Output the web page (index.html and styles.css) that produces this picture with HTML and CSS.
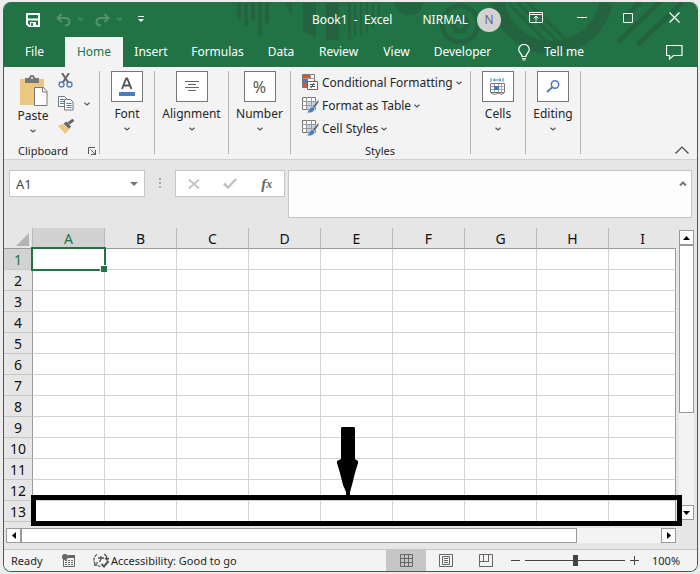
FILE: index.html
```html
<!DOCTYPE html>
<html lang="en">
<head>
<meta charset="utf-8">
<title>Book1 - Excel</title>
<link rel="stylesheet" href="styles.css">
</head>
<body>
<svg width="0" height="0" class="defs" aria-hidden="true">
  <symbol id="chev" viewBox="0 0 6 4"><path d="M.5.8L3 3 5.500.8" fill="none" stroke="currentColor" stroke-width="1.200"/></symbol>
  <symbol id="brush" viewBox="0 0 17 17">
    <path d="M.5.500h13v12H.5z" fill="#fff" stroke="#777"/>
    <path d="M4 4h9v8H4z" fill="#c3d3e8"/>
    <path d="M0 4.500h14M4.500 0v13M9.500 0v13M0 8.500h14" stroke="#999" fill="none"/>
    <path d="M16.500 2.500L10 10l2 2 5-7z" fill="#666" stroke="#f3f3f3" stroke-width=".6"/>
    <path d="M10 9.500c2 .5 3 1.500 2.500 3.500-1 2.500-5 3.500-8 2.500 2-.5 2-4 5.500-6z" fill="#4a7ebb" stroke="#f3f3f3" stroke-width=".6"/>
  </symbol>
</svg>
<div class="window">
  <header class="top">
    <svg class="pattern" width="695" height="65" viewBox="0 0 695 65" aria-hidden="true">
      <g fill="#246340">
        <path d="M235 1h4v16h-4zM242 1h4v23h-4zM249 1h4v17h-4zM256 1h4v32h-4zM263 1h4v20h-4zM283 1h7v14z"/>
        <path d="M301 1h13v34q-7-2-13-7zM324 1h13v37h-13zM346 1h3v36h-3zM352 1h2v34h-2zM358 1h2v32h-2zM364 1h2v29h-2zM370 1h2v25h-2zM376 1h2v18h-2z"/>
        <path d="M393 1h28a14 12 0 0 1-28 0z"/>
      </g>
      <g fill="none" stroke="#246340">
        <circle cx="458" cy="22" r="18" stroke-width="5"/>
        <circle cx="458" cy="22" r="7" stroke-width="5"/>
        <path d="M496 1a55 55 0 0 0 108 0" stroke-width="13"/>
        <path d="M507 2l44 44M516 1l42 41M525 0l40 39M491 2l48 48" stroke-width="3"/>
        <path d="M638 0l-18 17M658 0l-42 40M681 0l-46 43" stroke-width="5"/>
      </g>
    </svg>
    <div class="titlebar">
      <div class="quick">
        <button aria-label="Save"><svg width="14" height="14" viewBox="0 0 14 14"><path d="M1 1h12v12H3L1 11z" fill="none" stroke="#fff" stroke-width="2"/><path d="M1 6.500h12" stroke="#fff" stroke-width="2"/><path d="M4 9h6v4H4z" fill="#fff"/><path d="M5 10h2v3H5z" fill="#217346"/></svg></button>
        <button class="dim" aria-label="Undo"><svg width="27" height="14" viewBox="0 0 27 14" fill="none" stroke="currentColor"><path d="M5.500 1L1.500 5l4 4M2 5h7c6 0 6 7.500 0 7.500" stroke-width="2"/><path d="M22 5l2.500 2L27 5" stroke-width="1.300"/></svg></button>
        <button class="dim" aria-label="Redo"><svg width="27" height="14" viewBox="0 0 27 14" fill="none" stroke="currentColor"><path d="M9.500 1l4 4-4 4M13 5H6C0 5 0 12.500 6 12.500" stroke-width="2"/><path d="M22 5l2.500 2L27 5" stroke-width="1.300"/></svg></button>
        <button aria-label="Customize toolbar"><svg width="6" height="7" viewBox="0 0 6 7"><path d="M0 .5h6" stroke="#fff"/><path d="M0 3h6L3 6z" fill="#fff"/></svg></button>
      </div>
      <div class="doc">Book1&nbsp; -&nbsp; Excel</div>
      <div class="user">NIRMAL</div>
      <div class="avatar">N</div>
      <div class="winbtns">
        <button aria-label="Ribbon display options"><svg width="14" height="11" viewBox="0 0 14 11" fill="none" stroke="#fff"><path d="M.5.500h13v10H.5zM.5 2.500h13M7 9.500V4M4.500 6.500L7 4l2.500 2.500"/></svg></button>
        <button aria-label="Minimize"><svg width="10" height="11" viewBox="0 0 10 11"><path d="M0 5.500h10" stroke="#fff"/></svg></button>
        <button aria-label="Maximize"><svg width="10" height="11" viewBox="0 0 10 11"><path d="M.5 1.500h9v9h-9z" fill="none" stroke="#fff"/></svg></button>
        <button aria-label="Close"><svg width="11" height="11" viewBox="0 0 11 11"><path d="M.5.500l10 10M10.500.5l-10 10" stroke="#fff" stroke-width="1.200"/></svg></button>
      </div>
    </div>
    <nav class="tabs">
      <button>File</button><button class="on">Home</button><button>Insert</button><button>Formulas</button><button>Data</button><button>Review</button><button>View</button><button>Developer</button>
      <button class="tell"><svg width="12" height="17" viewBox="0 0 12 17" fill="none" stroke="#fff"><path d="M4 12.500c0-3-3.300-4-3.300-7a5.300 5 0 0 1 10.600 0c0 3-3.300 4-3.300 7zM4 14.500h4M4.500 16h3" stroke-width="1.200"/></svg>Tell me</button>
      <button class="comment" aria-label="Comments"><svg width="17" height="15" viewBox="0 0 17 15"><path d="M.5.500h15.500v10H7.500L3.500 14v-3.500H.5z" fill="none" stroke="#fff" stroke-width="1.200"/></svg></button>
    </nav>
  </header>

  <section class="ribbon" aria-label="Ribbon">
    <div class="group clip">
      <div class="cliprow">
        <button class="paste"><svg width="29" height="31" viewBox="0 0 29 31"><path d="M1 4h24v26H1z" fill="#ecc77f"/><path d="M6 3h4c0-4 6-4 6 0h4v5H6z" fill="#777"/><circle cx="13" cy="3" r="1" fill="#f3f3f3"/><path d="M15.500 12.500h9l3.500 4v14H15.500z" fill="#fff" stroke="#777"/><path d="M23.500 12.500v4.500H28" fill="none" stroke="#777"/></svg><span>Paste</span><svg class="chev"><use href="#chev"/></svg></button>
        <div class="mini">
          <button aria-label="Cut"><svg width="15" height="15" viewBox="0 0 15 15" fill="none"><path d="M4 0l6.500 10M11 0L4.500 10" stroke="#666" stroke-width="2"/><circle cx="3.500" cy="11.500" r="2.500" stroke="#4a7ebb" stroke-width="1.300"/><circle cx="11.500" cy="11.500" r="2.500" stroke="#4a7ebb" stroke-width="1.300"/></svg></button>
          <button class="copy" aria-label="Copy"><svg width="16" height="15" viewBox="0 0 16 15"><path d="M.5.500h6l2.500 2.500v7.500H.5z" fill="#fff" stroke="#777"/><path d="M2 3.500h4M2 5.500h4M2 7.500h4" stroke="#4a7ebb"/><path d="M6.500 3.500h6l2.500 2.500v8H6.500z" fill="#fff" stroke="#777"/><path d="M8.500 7.500h5M8.500 9.500h5M8.500 11.500h5" stroke="#4a7ebb"/></svg><svg class="chev"><use href="#chev"/></svg></button>
          <button aria-label="Format painter"><svg width="16" height="15" viewBox="0 0 16 15"><path d="M0 7l5-2 6 5.500-3.500 4.500z" fill="#ecc77f"/><path d="M5.500 4.500l3-2L13 7.500 11 10z" fill="#666"/><path d="M10.500 4.500L15.500.8" stroke="#666" stroke-width="3"/></svg></button>
        </div>
      </div>
      <div class="label"><span>Clipboard</span><button aria-label="Clipboard options"><svg width="8" height="8" viewBox="0 0 8 8" fill="none" stroke="#555"><path d="M.5 7V.5H7M2.500 2.500l5 5M7.500 3v4.500H3"/></svg></button></div>
    </div>
    <div class="group g-font"><button class="big"><span class="tile"><svg width="18" height="22" viewBox="0 0 18 22"><path d="M4 13L8.200 2.500h1L13.500 13M5.500 9.500h6.500" fill="none" stroke="#555" stroke-width="1.900"/><path d="M1 16h16v4H1z" fill="#4a7ebb"/></svg></span><span>Font</span><svg class="chev"><use href="#chev"/></svg></button></div>
    <div class="group g-align"><button class="big"><span class="tile"><svg width="14" height="11" viewBox="0 0 14 11"><path d="M0 .5h14M3 3.500h8M0 6.500h14M3 9.500h8" stroke="#666"/></svg></span><span>Alignment</span><svg class="chev"><use href="#chev"/></svg></button></div>
    <div class="group g-num"><button class="big"><span class="tile pct">%</span><span>Number</span><svg class="chev"><use href="#chev"/></svg></button></div>
    <div class="group g-styles">
      <button class="row"><svg width="17" height="17" viewBox="0 0 17 17"><path d="M.5.500h12v13H.5z" fill="#fff" stroke="#777"/><path d="M1 1h7v4H1zM1 9h4v4H1z" fill="#dc5532"/><path d="M1 5h5v4H1z" fill="#4a7ebb"/><path d="M8.500 0v5M1 4.500h12" stroke="#999"/><path d="M5.500 7.500h10v8h-10z" fill="#fff" stroke="#666"/><path d="M8 10.500h5M8 12.500h5M12 9l-3 5" stroke="#555"/></svg>Conditional Formatting<svg class="chev"><use href="#chev"/></svg></button>
      <button class="row"><svg width="17" height="17"><use href="#brush"/></svg>Format as Table<svg class="chev"><use href="#chev"/></svg></button>
      <button class="row"><svg width="17" height="17"><use href="#brush"/></svg>Cell Styles<svg class="chev"><use href="#chev"/></svg></button>
      <div class="label">Styles</div>
    </div>
    <div class="group g-cells"><button class="big"><span class="tile"><svg width="16" height="18" viewBox="0 0 16 18"><path d="M1 0v4M13 0v4M3 2h8M5 .5L3.500 2 5 3.500M9.500.5L11 2 9.500 3.500" fill="none" stroke="#4a7ebb"/><path d="M.5 5.500h14v9H.5z" fill="#fff" stroke="#777"/><path d="M1 8.500h13M1 11.500h13M4.500 6v8M8.500 6v8M11.500 6v8" stroke="#aaa"/><path d="M1 15q2 2 5 1l2-1 2 1q2 1 4-1" fill="none" stroke="#777"/><path d="M4 8h5v4H4z" fill="#3f78c0"/></svg></span><span>Cells</span><svg class="chev"><use href="#chev"/></svg></button></div>
    <div class="group g-edit"><button class="big"><span class="tile"><svg width="14" height="13" viewBox="0 0 14 13"><circle cx="9" cy="4.500" r="3.700" fill="none" stroke="#4a7ebb" stroke-width="1.500"/><path d="M6 7.500L1 12" stroke="#4a7ebb" stroke-width="2"/></svg></span><span>Editing</span><svg class="chev"><use href="#chev"/></svg></button></div>
    <button class="collapse" aria-label="Collapse ribbon"><svg width="14" height="8" viewBox="0 0 14 8"><path d="M.5 7.500L7 1l6.500 6.500" fill="none" stroke="#444" stroke-width="1.200"/></svg></button>
  </section>

  <section class="formula">
    <div class="namebox"><input aria-label="Name box" value="A1"><button aria-label="Name list"><svg width="8" height="4" viewBox="0 0 8 4"><path d="M0 0h8L4 4z" fill="#777"/></svg></button></div>
    <svg class="dots" width="2" height="10" viewBox="0 0 2 10"><path d="M0 0h2v2H0zM0 4h2v2H0zM0 8h2v2H0z" fill="#aaa"/></svg>
    <div class="fxbox">
      <button aria-label="Cancel"><svg width="12" height="10" viewBox="0 0 12 10"><path d="M1 .5l10 9M11 .5l-10 9" stroke="#c2c2c2" stroke-width="1.800"/></svg></button>
      <button aria-label="Enter"><svg width="14" height="11" viewBox="0 0 14 11"><path d="M1 5.500l4 4L13 1" fill="none" stroke="#c2c2c2" stroke-width="2.500"/></svg></button>
      <button class="fx" aria-label="Insert function">f<small>x</small></button>
    </div>
    <div class="fbar"><textarea aria-label="Formula bar"></textarea><button aria-label="Collapse formula bar"><svg width="8" height="5" viewBox="0 0 8 5"><path d="M1 4.500l3-3 3 3" fill="none" stroke="#777" stroke-width="2"/></svg></button></div>
  </section>

  <main class="sheetarea">
    <div class="sheet">
      <table>
        <colgroup><col class="rh"><col class="c"><col class="c"><col class="c"><col class="c"><col class="c"><col class="c"><col class="c"><col class="c"><col></colgroup>
        <thead><tr><th class="corner"><svg width="13" height="13" viewBox="0 0 13 13"><path d="M13 0v13H0z" fill="#b4b4b4"/></svg></th><th class="sel">A</th><th>B</th><th>C</th><th>D</th><th>E</th><th>F</th><th>G</th><th>H</th><th>I</th></tr></thead>
        <tbody>
          <tr><th class="sel">1</th><td class="active"><span class="cursor"></span></td><td></td><td></td><td></td><td></td><td></td><td></td><td></td><td></td></tr>
          <tr><th>2</th><td></td><td></td><td></td><td></td><td></td><td></td><td></td><td></td><td></td></tr>
          <tr><th>3</th><td></td><td></td><td></td><td></td><td></td><td></td><td></td><td></td><td></td></tr>
          <tr><th>4</th><td></td><td></td><td></td><td></td><td></td><td></td><td></td><td></td><td></td></tr>
          <tr><th>5</th><td></td><td></td><td></td><td></td><td></td><td></td><td></td><td></td><td></td></tr>
          <tr><th>6</th><td></td><td></td><td></td><td></td><td></td><td></td><td></td><td></td><td></td></tr>
          <tr><th>7</th><td></td><td></td><td></td><td></td><td></td><td></td><td></td><td></td><td></td></tr>
          <tr><th>8</th><td></td><td></td><td></td><td></td><td></td><td></td><td></td><td></td><td></td></tr>
          <tr><th>9</th><td></td><td></td><td></td><td></td><td></td><td></td><td></td><td></td><td></td></tr>
          <tr><th>10</th><td></td><td></td><td></td><td></td><td></td><td></td><td></td><td></td><td></td></tr>
          <tr><th>11</th><td></td><td></td><td></td><td></td><td></td><td></td><td></td><td></td><td></td></tr>
          <tr><th>12</th><td></td><td></td><td></td><td></td><td></td><td></td><td></td><td></td><td></td></tr>
          <tr><th>13</th><td></td><td></td><td></td><td></td><td></td><td></td><td></td><td></td><td></td></tr>
        </tbody>
      </table>
      <div class="mark"><svg width="22" height="70" viewBox="0 0 22 70"><path d="M5 0h12l1 1v31l3 2v2l-3 10-3 12-2 7v5H9v-5L6 58 3 46 0 36v-2l4-2V1z"/></svg></div>
    </div>
    <div class="vscroll">
      <button aria-label="Scroll up"><svg width="7" height="4" viewBox="0 0 7 4"><path d="M0 4h7L3.500 0z"/></svg></button>
      <div class="vthumb"></div><div class="grow"></div>
      <button aria-label="Scroll down"><svg width="7" height="4" viewBox="0 0 7 4"><path d="M0 0h7L3.500 4z"/></svg></button>
    </div>
  </main>
  <div class="hscroll">
    <button aria-label="Scroll left"><svg width="4" height="7" viewBox="0 0 4 7"><path d="M4 0v7L0 3.500z"/></svg></button>
    <div class="hthumb"></div><div class="grow"></div>
    <button aria-label="Scroll right"><svg width="4" height="7" viewBox="0 0 4 7"><path d="M0 0v7l4-3.500z"/></svg></button>
  </div>

  <footer class="status">
    <span class="ready">Ready</span>
    <button class="macro" aria-label="Record macro"><svg width="13" height="13" viewBox="0 0 13 13"><path d="M6 1h7v3H6z" fill="#666"/><path d="M1.500 5v7.500h11V2" fill="none" stroke="#666"/><path d="M3 6.500h8M3 8.500h8M3 10.500h8" stroke="#666" stroke-dasharray="2 1"/><circle cx="3" cy="3" r="3" fill="#666"/></svg></button>
    <button class="acc"><svg width="17" height="15" viewBox="0 0 17 15" fill="none" stroke="#555" stroke-width="1.300"><path d="M4 1.500C0 4 0 9 3 12M1 12h3V9" stroke-dasharray="3 1"/><path d="M5 5h6M8 3v3l-1.500 3M11 1c2 1 3 2 3 5M12 5l2 2 2-2M4.500 12.500l3 1"/><path d="M8.500 11l2.500 2.500L15.500 8" stroke-width="2"/></svg>Accessibility: Good to go</button>
    <div class="grow"></div>
    <button class="view on" aria-label="Normal view"><svg width="13" height="13" viewBox="0 0 13 13"><path d="M.5.500h12v12H.5zM4.500 0v13M8.500 0v13M0 4.500h13M0 8.500h13" fill="none" stroke="#666"/></svg></button>
    <button class="view" aria-label="Page layout"><svg width="14" height="13" viewBox="0 0 14 13"><path d="M.5.500h13v12H.5zM3.500 2.500h7v8h-7zM5 4.500h4M5 6.500h4M5 8.500h4" fill="none" stroke="#666"/></svg></button>
    <button class="view" aria-label="Page break preview"><svg width="14" height="13" viewBox="0 0 14 13"><path d="M.5.500h13v12H.5zM4.500 0v7M9.500 0v7M0 7.500h10" fill="none" stroke="#666"/></svg></button>
    <button class="zbtn" aria-label="Zoom out"><svg width="9" height="9" viewBox="0 0 9 9"><path d="M0 4.500h9" stroke="#444"/></svg></button>
    <input class="zoom" type="range" min="0" max="200" value="100" aria-label="Zoom">
    <button class="zbtn" aria-label="Zoom in"><svg width="9" height="9" viewBox="0 0 9 9"><path d="M0 4.500h9M4.500 0v9" stroke="#444"/></svg></button>
    <span class="pctval">100%</span>
  </footer>
</div>
</body>
</html>
```
FILE: styles.css
```css
* { box-sizing: border-box; }
body {
  margin: 0;
  padding: 2px 2px 3px 3px;
  background: #ececec;
  font: 12px/16px "Noto Sans", "Open Sans", sans-serif;
  color: #262626;
}
button { margin: 0; padding: 0; border: 0; background: none; font: inherit; color: inherit; display: flex; align-items: center; justify-content: center; white-space: nowrap; }
svg { display: block; flex: none; }
.defs { position: absolute; }
.grow { flex: 1; }
.chev { width: 6px; height: 4px; color: #555; }

.window { border: 1px solid #217346; border-top: 0; border-radius: 8px; overflow: hidden; background: #e6e6e6; }

.top { position: relative; background: #217346; color: #fff; }
.pattern { position: absolute; top: 0; right: 0; }
.titlebar { position: relative; display: flex; align-items: center; height: 35px; }
.quick { display: flex; align-items: center; gap: 12px; padding-left: 22px; width: 308px; }
.quick button:first-child { margin-right: 4px; }
.quick button:last-child { margin-left: 4px; }
.dim { color: #55936f; }
.doc { flex: 1; }
.user { padding-right: 9px; }
.avatar { width: 24px; height: 24px; border-radius: 50%; background: #d2d2d2; color: #666679; line-height: 24px; text-align: center; }
.winbtns { flex: none; display: flex; padding: 0 0 4px 12px; }
.winbtns button { width: 46px; height: 24px; }
.tabs { position: relative; display: flex; height: 30px; }
.tabs button { flex: none; }
.tabs button:nth-child(1) { width: 61px; }
.tabs button:nth-child(2) { width: 58px; }
.tabs button:nth-child(3) { width: 56px; }
.tabs button:nth-child(4) { width: 77px; }
.tabs button:nth-child(5) { width: 50px; }
.tabs button:nth-child(6) { width: 65px; }
.tabs button:nth-child(7) { width: 51px; }
.tabs button:nth-child(8) { width: 81px; }
.tabs .on { background: #f3f3f3; color: #217346; }
.tabs .tell { padding-left: 15px; gap: 14px; }
.tabs .comment { margin-left: auto; padding-right: 14px; }

.ribbon { display: flex; height: 93px; padding: 4px 0 5px; background: #f3f3f3; border-bottom: 1px solid #d2d2d2; }
.group { flex: none; display: flex; flex-direction: column; align-items: center; border-right: 1px solid #b4b4b4; }
.clip { width: 96px; }
.g-font { width: 55px; }
.g-align { width: 74px; }
.g-num { width: 62px; }
.g-styles { width: 180px; align-items: flex-start; padding-left: 11px; }
.g-cells, .g-edit { width: 55px; }
.big { flex-direction: column; }
.tile { display: flex; align-items: center; justify-content: center; width: 32px; height: 31px; margin-bottom: 4px; border: 1px solid #777; background: #fff; }
.big .chev, .paste .chev { margin-top: 5px; }
.pct { font-size: 16px; color: #555; }
.cliprow { display: flex; width: 100%; height: 72px; flex: none; }
.paste { flex-direction: column; justify-content: flex-start; width: 54px; padding: 4px 0 0 4px; }
.paste span { margin-top: 2px; }
.mini { display: flex; flex-direction: column; gap: 8px; padding-top: 2px; align-items: flex-start; }
.copy { gap: 10px; }
.clip .label { display: flex; align-items: center; justify-content: space-between; width: 100%; padding: 0 3px 0 14px; }
.label { font-size: 11px; line-height: 16px; }
.row { flex: none; height: 23px; gap: 3px; }
.g-styles .label { width: 100%; margin-top: 3px; padding-right: 12px; text-align: center; }
.collapse { margin: auto 8px 0 auto; }

.formula { display: flex; align-items: flex-start; height: 68px; padding: 10px 5px 0; }
.namebox { display: flex; width: 136px; height: 27px; border: 1px solid #c6c6c6; background: #fff; }
.namebox input { flex: 1; min-width: 0; padding: 0 6px; border: 0; outline: 0; background: none; font: inherit; font-size: 13px; color: #444; }
.namebox button { width: 20px; }
.dots { margin: 8px 14px 0; }
.fxbox { display: flex; align-items: center; justify-content: space-around; width: 110px; height: 27px; margin-right: 3px; border: 1px solid #c6c6c6; background: #fff; }
.fx { font: italic bold 15px/20px "Liberation Serif", serif; color: #666; }
.fx small { font-size: 12px; }
.fbar { flex: 1; display: flex; align-items: flex-start; height: 48px; border: 1px solid #c6c6c6; background: #fdfdfd; }
.fbar textarea { flex: 1; height: 100%; border: 0; outline: 0; resize: none; background: none; }
.fbar button { width: 17px; height: 24px; }

.sheetarea { display: flex; align-items: stretch; gap: 3px; padding-right: 3px; }
.sheet { position: relative; flex: 1; }
table { width: 100%; table-layout: fixed; border-collapse: separate; border-spacing: 0; }
.rh { width: 29px; }
.c { width: 72px; }
th, td { height: 21px; padding: 0; }
td { background: #fff; border-right: 1px solid #d2d2d2; border-bottom: 1px solid #d2d2d2; }
td:last-child { border-right-color: #999; }
th { padding-top: 1px; font-size: 14px; line-height: 19px; font-weight: 400; color: #111; border-right: 1px solid #bbb; }
thead th { border-bottom: 1px solid #999; }
thead th:last-child { border-right: 0; }
tbody th { border-right-color: #999; border-bottom: 1px solid #c6c6c6; }
th.sel { background: #d2d2d2; color: #217346; }
.corner svg { margin: 2px 3px 0 auto; }
.active { position: relative; }
.cursor { position: absolute; inset: -2px; border: 2px solid #217346; z-index: 1; }
.cursor::after { content: ""; position: absolute; right: -3px; bottom: -3px; width: 6px; height: 6px; border: 1px solid #fff; border-width: 1px 0 0 1px; background: #217346; }
.mark { position: absolute; left: 27px; right: -6px; bottom: -4px; height: 31px; border: 5px solid #000; z-index: 2; }
.mark svg { position: absolute; left: 47%; bottom: 24px; }
.vscroll { display: flex; flex-direction: column; width: 15px; padding: 2px 0; }
.vscroll button, .hscroll button { flex: none; width: 15px; height: 15px; border: 1px solid #999; background: #fff; }
.vscroll .grow, .hscroll .grow { background: #f3f3f3; }
.vthumb { flex: 0 0 58%; border: 1px solid #999; background: #fff; }
.hscroll { display: flex; height: 27px; padding: 6px 21px 6px 2px; }
.hthumb { flex: 0 0 83%; margin: 0; border: 1px solid #999; background: #fff; }

.status { display: flex; align-items: center; height: 22px; background: #f3f3f3; border-top: 1px solid #c6c6c6; font-size: 11px; }
.ready { width: 58px; padding-left: 7px; }
.macro { margin-right: 18px; }
.acc { gap: 1px; }
.view { width: 40px; height: 21px; }
.view.on { background: #c6c6c6; }
.zbtn { width: 19px; }
.zoom { width: 100px; height: 20px; margin: 0; appearance: none; background: linear-gradient(#444, #444) center / 100% 1px no-repeat; }
.zoom::-webkit-slider-thumb { appearance: none; width: 5px; height: 11px; background: #444; }
.pctval { width: 53px; padding-left: 8px; }
```
